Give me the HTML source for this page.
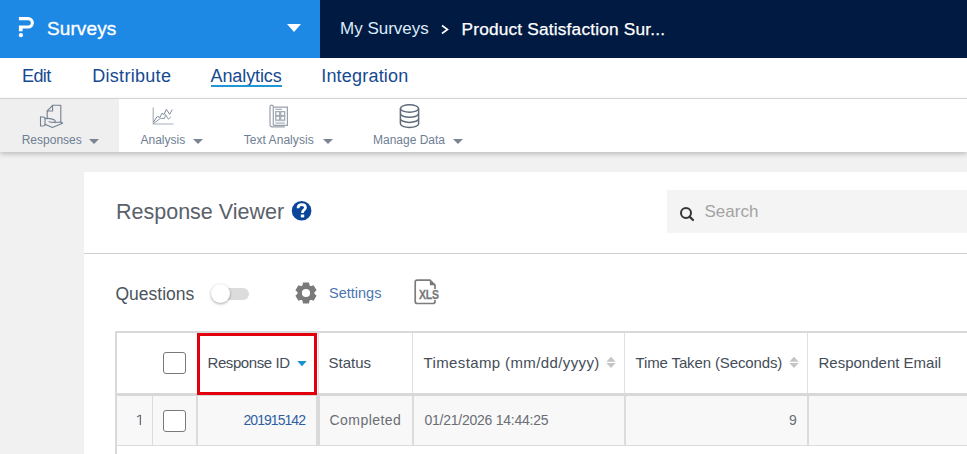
<!DOCTYPE html>
<html><head><meta charset="utf-8">
<style>
*{margin:0;padding:0;box-sizing:border-box}
html,body{width:967px;height:454px;overflow:hidden;background:#f1f1f1;font-family:"Liberation Sans",sans-serif}
.a{position:absolute}
.t{position:absolute;white-space:nowrap;line-height:1}
#top{left:0;top:0;width:967px;height:58px;background:#011a42}
#topl{left:0;top:0;width:320px;height:58px;background:#1e88e5}
#nav{left:0;top:58px;width:967px;height:41px;background:#fff;border-bottom:1px solid #d9d9d9}
#tb{left:0;top:99px;width:967px;height:53px;background:#fff;box-shadow:0 2px 5px rgba(0,0,0,.22)}
#tbact{left:0;top:99px;width:119px;height:53px;background:#efefef}
.nv{color:#154a91;font-size:18px}
.tl{color:#6e7e93;font-size:12px}
.car{position:absolute;width:0;height:0;border-left:5px solid transparent;border-right:5px solid transparent;border-top:5.2px solid #7a8492}
#panel{left:84px;top:172px;width:883px;height:282px;background:#fff}
#div1{left:84px;top:253px;width:883px;height:1px;background:#d0d0d0}
#search{left:667px;top:190px;width:300px;height:43px;background:#f4f4f4}
.th{color:#444d58;font-size:15px}
.td{color:#696e75;font-size:14px}
.chk{position:absolute;width:23px;height:22px;border:1.4px solid #7a7a7a;border-radius:3px;background:#fff}
</style></head><body>
<div class="a" id="top"></div>
<div class="a" id="topl"></div>
<!-- logo -->
<svg class="a" style="left:14px;top:14px" width="24" height="26" viewBox="0 0 24 26">
  <path d="M4.9 3.1 H14.15 A5.75 5.75 0 0 1 14.15 14.6 H8.6 V17.2 H4.9 V11.5 H14.15 A2.65 2.65 0 0 0 14.15 6.2 H4.9 Z" fill="#fff"/>
  <circle cx="6.9" cy="21.2" r="2.1" fill="#fff"/>
</svg>
<div class="t" style="left:47px;top:18.6px;font-size:19px;color:#fff;-webkit-text-stroke:0.35px #fff;letter-spacing:0.1px">Surveys</div>
<svg class="a" style="left:286px;top:23px" width="16" height="10" viewBox="0 0 16 10"><path d="M1 1 H15 L8 9 Z" fill="#fff"/></svg>
<div class="t" style="left:340px;top:19.6px;font-size:17px;color:#dcecfa">My Surveys</div>
<svg class="a" style="left:440px;top:24px" width="10" height="11" viewBox="0 0 10 11"><path d="M2 1.5 L7.5 5.5 L2 9.5" fill="none" stroke="#fff" stroke-width="1.6"/></svg>
<div class="t" style="left:461.5px;top:20.8px;font-size:17.3px;color:#fff;-webkit-text-stroke:0.25px #fff;letter-spacing:0.18px">Product Satisfaction Sur...</div>

<div class="a" id="nav"></div>
<div class="t nv" style="left:22px;top:66.8px;letter-spacing:-0.6px">Edit</div>
<div class="t nv" style="left:92.2px;top:66.8px;letter-spacing:0.3px">Distribute</div>
<div class="t nv" style="left:210.5px;top:66.8px;letter-spacing:-0.1px">Analytics</div>
<div class="a" style="left:211px;top:85px;width:71px;height:2px;background:#1e96d8"></div>
<div class="t nv" style="left:321.2px;top:66.8px;letter-spacing:0.2px">Integration</div>

<div class="a" id="tb"></div>
<div class="a" id="tbact"></div>
<div class="t tl" style="left:21.7px;top:133.8px">Responses</div>
<div class="car" style="left:89px;top:139px"></div>
<div class="t tl" style="left:140.5px;top:133.8px">Analysis</div>
<div class="car" style="left:193px;top:139px"></div>
<div class="t tl" style="left:243.7px;top:133.8px;letter-spacing:0.05px">Text Analysis</div>
<div class="car" style="left:323px;top:139px"></div>
<div class="t tl" style="left:373px;top:133.8px">Manage Data</div>
<div class="car" style="left:453px;top:139px"></div>


<!-- toolbar icons -->
<svg class="a" style="left:36px;top:101px" width="32" height="30" viewBox="0 0 32 30">
 <g fill="none" stroke="#738093" stroke-width="1.1" stroke-linejoin="round" stroke-linecap="round">
  <path d="M11.2 17.8 V10 L16.6 4.3 H24.8 V21"/>
  <path d="M16.6 4.3 V10 H11.2"/>
  <path d="M4.5 15.7 L8.6 16.2 L9 17 V24 L8.6 24.8 L4.5 25 Z"/>
  <path d="M9 17.6 C12 17.1 16 17.6 18.6 19.1 C20 20.1 19.4 21.4 17.4 21.4 C15.5 21.4 14 21 13 20.7"/>
  <path d="M9 23.3 L16.4 26.4 L26.6 22.3 L24.8 21 L18.5 21.5"/>
 </g>
</svg>
<svg class="a" style="left:148px;top:103px" width="30" height="25" viewBox="0 0 30 25">
 <g fill="none" stroke-linejoin="round">
  <path d="M5.2 4.4 V21 H25.6" stroke="#a7b0bc" stroke-width="1.15"/>
  <path d="M5.5 19 L9.4 13.2 L11.8 14.6 L14 10.2 L16 11.6 L18.4 6.3 L21.7 11.3 L24.2 6.6" stroke="#7f8a99" stroke-width="1"/>
  <path d="M5.5 20.5 L12.4 15.4 L16.5 15.4 L17.6 11.6 L20.4 16.2 L22.8 14" stroke="#8d97a5" stroke-width="1"/>
 </g>
</svg>
<svg class="a" style="left:265px;top:102px" width="28" height="28" viewBox="0 0 28 28">
 <g fill="none" stroke="#98a1ad" stroke-width="1.2">
  <path d="M8.3 4.8 V23.6 M5 22.6 V4.8 A1.65 1.65 0 0 1 8.3 4.8"/>
  <path d="M8.3 5.1 H22.4 V23.4 H8.3"/>
  <path d="M5 22.6 A2.2 2.2 0 0 0 7.2 24.8 H19.8"/>
 </g>
 <path d="M10.3 7.3 H17" stroke="#939dab" stroke-width="1"/>
 <g fill="#fff" stroke="#a2abb7" stroke-width="1.3">
  <rect x="10.75" y="9.65" width="3.9" height="3.9"/><rect x="15.75" y="9.65" width="3.9" height="3.9"/>
  <rect x="10.75" y="14.25" width="3.9" height="3.9"/><rect x="15.75" y="14.25" width="3.9" height="3.9"/>
 </g>
 <rect x="10.1" y="19.3" width="10" height="2.3" fill="#e3e6ea"/>
 <path d="M10.3 21.2 H19.8" stroke="#a8b0bb" stroke-width="0.9"/>
</svg>
<svg class="a" style="left:395px;top:101px" width="28" height="30" viewBox="0 0 28 30">
 <g fill="none" stroke="#5f6b7a" stroke-width="1.5">
  <ellipse cx="14.5" cy="7.5" rx="9.1" ry="3.7"/>
  <path d="M5.4 7.5 V22.8 A9.1 3.7 0 0 0 23.6 22.8 V7.5"/>
  <path d="M5.4 12.6 A9.1 3.7 0 0 0 23.6 12.6"/>
  <path d="M5.4 17.7 A9.1 3.7 0 0 0 23.6 17.7"/>
 </g>
</svg>
<div class="a" id="panel"></div>
<div class="t" style="left:116px;top:201.8px;font-size:21.5px;color:#5a616a">Response Viewer</div>
<div class="a" id="search"></div>
<div class="t" style="left:704.5px;top:203.3px;font-size:17px;color:#a3a3a3">Search</div>
<div class="a" id="div1"></div>

<div class="t" style="left:115.5px;top:286.2px;font-size:17.5px;color:#4b535c">Questions</div>
<div class="a" style="left:214px;top:288px;width:35px;height:12px;border-radius:6px;background:#dcdcdc"></div>
<div class="a" style="left:211px;top:284px;width:19px;height:19px;border-radius:50%;background:#fff;box-shadow:0 1px 3px rgba(0,0,0,.35)"></div>

<svg class="a" style="left:291px;top:200px" width="22" height="22" viewBox="0 0 22 22">
 <circle cx="10.6" cy="10.8" r="9.8" fill="#0a4599"/>
 <path d="M7 8.3 C7 5.9 8.7 4.6 10.8 4.6 C12.9 4.6 14.5 5.8 14.5 7.7 C14.5 9.7 11.5 10.1 11.5 12.4 V13.1" fill="none" stroke="#fff" stroke-width="2.7"/>
 <rect x="9.8" y="14.5" width="3.4" height="2.9" fill="#fff"/>
</svg>
<svg class="a" style="left:677px;top:204px" width="20" height="20" viewBox="0 0 20 20">
 <circle cx="9" cy="9" r="5" fill="none" stroke="#363636" stroke-width="2"/>
 <path d="M12.6 12.6 L16 16" stroke="#363636" stroke-width="2.2" stroke-linecap="round"/>
</svg>
<svg class="a" style="left:295px;top:282px" width="22" height="22" viewBox="0 0 22 22">
 <path d="M7.40 3.63 L8.00 0.52 L14.00 0.52 L14.60 3.63 L15.58 4.20 L18.58 3.16 L21.58 8.36 L19.18 10.43 L19.18 11.57 L21.58 13.64 L18.58 18.84 L15.58 17.80 L14.60 18.37 L14.00 21.48 L8.00 21.48 L7.40 18.37 L6.42 17.80 L3.42 18.84 L0.42 13.64 L2.82 11.57 L2.82 10.43 L0.42 8.36 L3.42 3.16 L6.42 4.20 Z" fill="#7a7a7a"/>
 <circle cx="11" cy="11" r="8.3" fill="#7a7a7a"/>
 <circle cx="11" cy="11" r="4.1" fill="#fff"/>
</svg>
<svg class="a" style="left:410px;top:275px" width="34" height="34" viewBox="0 0 34 34">
 <path d="M7.2 5.1 H19.9 L25 10.2 V26.5 A2 2 0 0 1 23 28.5 H7.2 A2 2 0 0 1 5.2 26.5 V7.1 A2 2 0 0 1 7.2 5.1 Z" fill="#fff" stroke="#7d7d7d" stroke-width="1.7"/>
 <path d="M19.9 5.1 V10.2 H25 Z" fill="#787878"/>
 <rect x="21" y="14" width="9" height="11" fill="#fff"/>
 </svg>
<div class="t" style="left:418.6px;top:289px;font-size:12.5px;font-weight:bold;color:#7a7a7a;-webkit-text-stroke:0.3px #7a7a7a;transform:scaleX(0.84);transform-origin:0 0;letter-spacing:-0.3px">XLS</div>
<div class="t" style="left:329px;top:286.4px;font-size:14.5px;color:#4a76b0">Settings</div>


<div class="a" style="left:115px;top:331px;width:852px;height:2px;background:#d9d9d9"></div>
<div class="a" style="left:115px;top:331px;width:2px;height:123px;background:#d9d9d9"></div>
<div class="a" style="left:117px;top:393px;width:850px;height:3px;background:#d8d8d8"></div>
<div class="a" style="left:117px;top:396px;width:850px;height:49px;background:#f8f8f8"></div>
<div class="a" style="left:117px;top:445px;width:850px;height:1px;background:#dcdcdc"></div>
<div class="a" style="left:318px;top:333px;width:1px;height:60px;background:#e0e0e0"></div>
<div class="a" style="left:412px;top:333px;width:1px;height:60px;background:#e0e0e0"></div>
<div class="a" style="left:624px;top:333px;width:1px;height:60px;background:#e0e0e0"></div>
<div class="a" style="left:807px;top:333px;width:1px;height:60px;background:#e0e0e0"></div>
<div class="a" style="left:152px;top:396px;width:1px;height:49px;background:#dcdcdc"></div>
<div class="a" style="left:196px;top:396px;width:2px;height:49px;background:#dcdcdc"></div>
<div class="a" style="left:316px;top:396px;width:4px;height:49px;background:#dadada"></div>
<div class="a" style="left:412px;top:396px;width:2px;height:49px;background:#dcdcdc"></div>
<div class="a" style="left:624px;top:396px;width:2px;height:49px;background:#dcdcdc"></div>
<div class="a" style="left:807px;top:396px;width:2px;height:49px;background:#dcdcdc"></div>
<div class="a" style="left:197px;top:333px;width:120px;height:62px;border:3px solid #e2000e"></div>
<div class="chk" style="left:163px;top:352px"></div>
<div class="chk" style="left:163px;top:410px"></div>
<svg class="a" style="left:297px;top:361px" width="10" height="6" viewBox="0 0 10 6"><path d="M0.3 0 H9.7 L5 5.2 Z" fill="#1591d6"/></svg>
<svg class="a" style="left:606px;top:356px" width="10" height="13" viewBox="0 0 10 13"><path d="M0.3 5.8 L5 0.8 L9.7 5.8 Z M0.3 7 H9.7 L5 12 Z" fill="#c5c5c5"/></svg>
<svg class="a" style="left:789px;top:356px" width="10" height="13" viewBox="0 0 10 13"><path d="M0.3 5.8 L5 0.8 L9.7 5.8 Z M0.3 7 H9.7 L5 12 Z" fill="#c5c5c5"/></svg>

<div class="t th" style="left:207.5px;top:355.3px;letter-spacing:-0.42px">Response ID</div>
<div class="t th" style="left:328.5px;top:355.3px">Status</div>
<div class="t th" style="left:423.5px;top:355.3px;letter-spacing:0.38px">Timestamp (mm/dd/yyyy)</div>
<div class="t th" style="left:635.5px;top:355.3px;letter-spacing:-0.13px">Time Taken (Seconds)</div>
<div class="t th" style="left:818.5px;top:355.3px">Respondent Email</div>
<svg class="a" style="left:130px;top:408px" width="20" height="22" viewBox="0 0 20 22"><path d="M10.4 7 V17" stroke="#6a6f76" stroke-width="1.3" fill="none"/><path d="M7 8.9 L10.4 7.1" stroke="#6a6f76" stroke-width="1.1" fill="none"/></svg>
<div class="t td" style="left:243.5px;top:413px;color:#2f5fa3;letter-spacing:-0.95px">201915142</div>
<div class="t td" style="left:329.5px;top:413px;letter-spacing:0.45px">Completed</div>
<div class="t td" style="left:424.5px;top:413px;letter-spacing:-0.25px">01/21/2026 14:44:25</div>
<div class="t td" style="left:789px;top:413px">9</div>
</body></html>
